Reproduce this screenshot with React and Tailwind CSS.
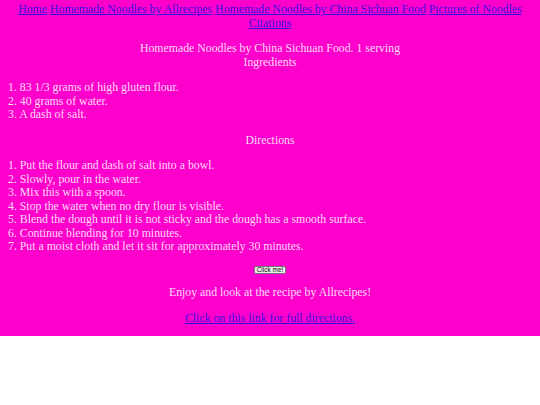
import React from 'react';

const navLinks = [
  'Home',
  'Homemade Noodles by Allrecipes',
  'Homemade Noodles by China Sichuan Food',
  'Pictures of Noodles',
  'Citations',
];

const ingredients = [
  '83 1/3 grams of high gluten flour.',
  '40 grams of water.',
  'A dash of salt.',
];

const directions = [
  'Put the flour and dash of salt into a bowl.',
  'Slowly, pour in the water.',
  'Mix this with a spoon.',
  'Stop the water when no dry flour is visible.',
  'Blend the dough until it is not sticky and the dough has a smooth surface.',
  'Continue blending for 10 minutes.',
  'Put a moist cloth and let it sit for approximately 30 minutes.',
];

export default function App() {
  return (
    <div className="min-h-[405px] bg-white font-['Liberation_Serif',serif] text-[11.8px] leading-[13.5px]">
      <div className="bg-[#ff00cc] text-[#ffdcf6] px-[8px] pt-[3px] pb-[11px]">
        <nav className="text-center">
          {navLinks.map((l, i) => (
            <React.Fragment key={l}>
              <a href="#" className="text-[#3a10e0] underline">{l}</a>
              {i < navLinks.length - 1 ? ' ' : ''}
            </React.Fragment>
          ))}
        </nav>

        <p className="text-center mt-[12px]">
          Homemade Noodles by China Sichuan Food. 1 serving
          <br />
          Ingredients
        </p>

        <div className="mt-[12px]">
          {ingredients.map((t, i) => (
            <div key={i}>{i + 1}. {t}</div>
          ))}
        </div>

        <p className="text-center mt-[12px]">Directions</p>

        <div className="mt-[12px]">
          {directions.map((t, i) => (
            <div key={i}>{i + 1}. {t}</div>
          ))}
        </div>

        <div className="flex justify-center mt-[12px] h-[8.5px]">
          <button className="h-[8.5px] font-['Liberation_Sans',sans-serif] text-[6.5px] leading-none text-black bg-[#efefef] border border-[#767676] rounded-[2px] px-[2px]">
            Click me!
          </button>
        </div>

        <p className="text-center mt-[12px]">Enjoy and look at the recipe by Allrecipes!</p>

        <p className="text-center mt-[12px]">
          <a href="#" className="text-[#3a10e0] underline">Click on this link for full directions.</a>
        </p>
      </div>
    </div>
  );
}
